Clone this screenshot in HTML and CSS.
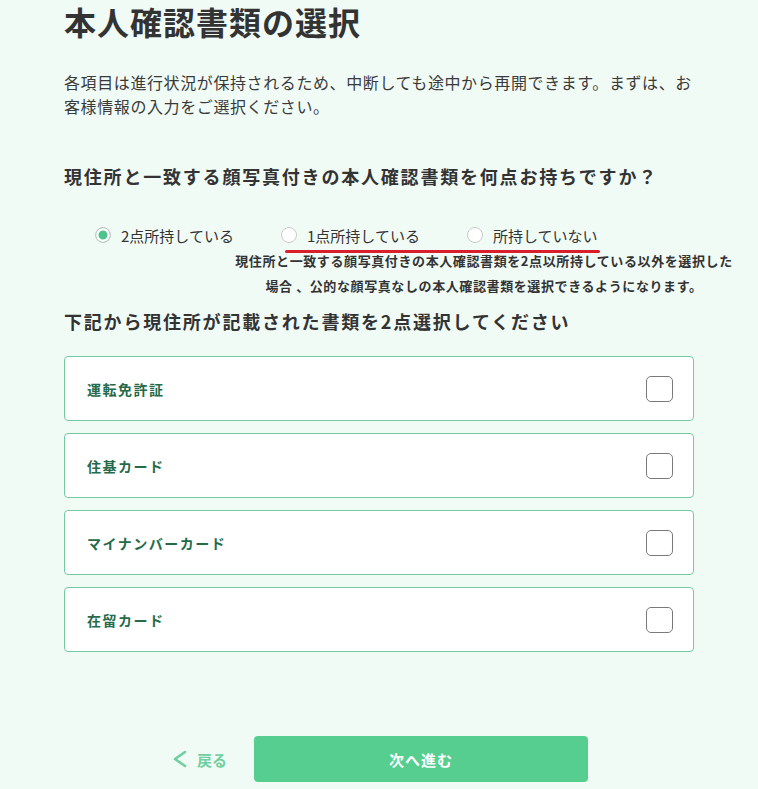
FILE: index.html
```html
<!DOCTYPE html>
<html lang="ja">
<head>
  <meta charset="utf-8">
  <link rel="stylesheet" href="styles.css">
</head>
<body>
<div class="page">
  <h1 class="title">本人確認書類の選択</h1>
  <p class="lead">各項目は進行状況が保持されるため、中断しても途中から再開できます。まずは、お<br>客様情報の入力をご選択ください。</p>

  <h2 class="question">現住所と一致する顔写真付きの本人確認書類を何点お持ちですか？</h2>

  <div class="radios">
    <label class="radio"><span class="dot checked"></span>2点所持している</label>
    <label class="radio"><span class="dot"></span>1点所持している</label>
    <label class="radio"><span class="dot"></span>所持していない</label>
    <span class="redline"></span>
  </div>
  <p class="note">現住所と一致する顔写真付きの本人確認書類を2点以所持している以外を選択した<br>場合 、公的な顔写真なしの本人確認書類を選択できるようになります。</p>

  <h2 class="question q2">下記から現住所が記載された書類を2点選択してください</h2>

  <div class="cards">
    <div class="card"><span class="card-label">運転免許証</span><span class="check"></span></div>
    <div class="card"><span class="card-label">住基カード</span><span class="check"></span></div>
    <div class="card"><span class="card-label">マイナンバーカード</span><span class="check"></span></div>
    <div class="card"><span class="card-label">在留カード</span><span class="check"></span></div>
  </div>

  <div class="actions">
    <a class="back">
      <svg width="16" height="18" viewBox="0 0 16 18"><path d="M13 2 L3 9 L13 16" fill="none" stroke="currentColor" stroke-width="2.6" stroke-linecap="round" stroke-linejoin="round"/></svg>
      戻る
    </a>
    <button class="next">次へ進む</button>
  </div>
</div>
</body>
</html>
```

FILE: styles.css
```css
html, body {
  margin: 0;
  padding: 0;
  background: #f1fbf6;
}

body {
  font-family: "Noto Sans CJK JP", "Noto Sans", sans-serif;
  color: #333;
}

.page {
  width: 630px;
  margin-left: 64px;
  position: relative;
}

.title {
  margin: 0;
  padding-top: 1px;
  font-size: 32px;
  line-height: 40px;
  font-weight: 700;
  letter-spacing: 1px;
  color: #333;
}

.lead {
  margin: 29px 0 0;
  width: 660px;
  font-size: 16px;
  line-height: 24px;
  letter-spacing: 0.6px;
  color: #3a3a3a;
}

.question {
  margin: 44px 0 0;
  font-size: 18px;
  line-height: 28px;
  font-weight: 700;
  letter-spacing: 1.8px;
  color: #333;
}

.q2 {
  margin-top: 9px;
}

.radios {
  position: relative;
  display: flex;
  margin: 35px 0 0 31px;
  height: 20px;
  align-items: center;
}

.radio {
  display: flex;
  align-items: center;
  font-size: 15px;
  color: #333;
}

.radio:nth-child(1) { width: 186px; }
.radio:nth-child(2) { width: 186px; }

.dot {
  width: 16px;
  height: 16px;
  box-sizing: border-box;
  border: 1px solid #cacaca;
  border-radius: 50%;
  background: #fff;
  margin-right: 10px;
}

.dot.checked {
  background: #4cc38a;
  box-shadow: inset 0 0 0 2.5px #fff;
}

.redline {
  position: absolute;
  left: 190px;
  top: 25px;
  width: 315px;
  height: 3px;
  border-radius: 2px;
  background: #d81f2b;
}

.note {
  margin: 3px 0 0 170px;
  width: 500px;
  text-align: center;
  font-size: 13px;
  line-height: 25px;
  font-weight: 700;
  letter-spacing: 0.6px;
  color: #333;
  white-space: nowrap;
}

.cards {
  display: flex;
  flex-direction: column;
  gap: 12px;
  margin-top: 21px;
}

.card {
  display: flex;
  align-items: center;
  justify-content: space-between;
  height: 65px;
  box-sizing: border-box;
  padding: 0 20px 0 22px;
  background: #fff;
  border: 1px solid #74c9a1;
  border-radius: 4px;
}

.card-label {
  font-size: 14px;
  font-weight: 700;
  letter-spacing: 1.5px;
  color: #256b4a;
}

.check {
  width: 27px;
  height: 26px;
  box-sizing: border-box;
  border: 1.5px solid #7a7a7a;
  border-radius: 5px;
  background: #fff;
}

.actions {
  display: flex;
  align-items: center;
  margin-top: 84px;
  padding-left: 108px;
}

.back {
  display: flex;
  align-items: center;
  gap: 9px;
  width: 82px;
  font-size: 15px;
  font-weight: 700;
  color: #6fcfa0;
}

.next {
  width: 334px;
  height: 46px;
  border: none;
  border-radius: 4px;
  background: #56ce8f;
  color: #fff;
  font-family: inherit;
  font-size: 15px;
  font-weight: 700;
  letter-spacing: 1px;
}
```
